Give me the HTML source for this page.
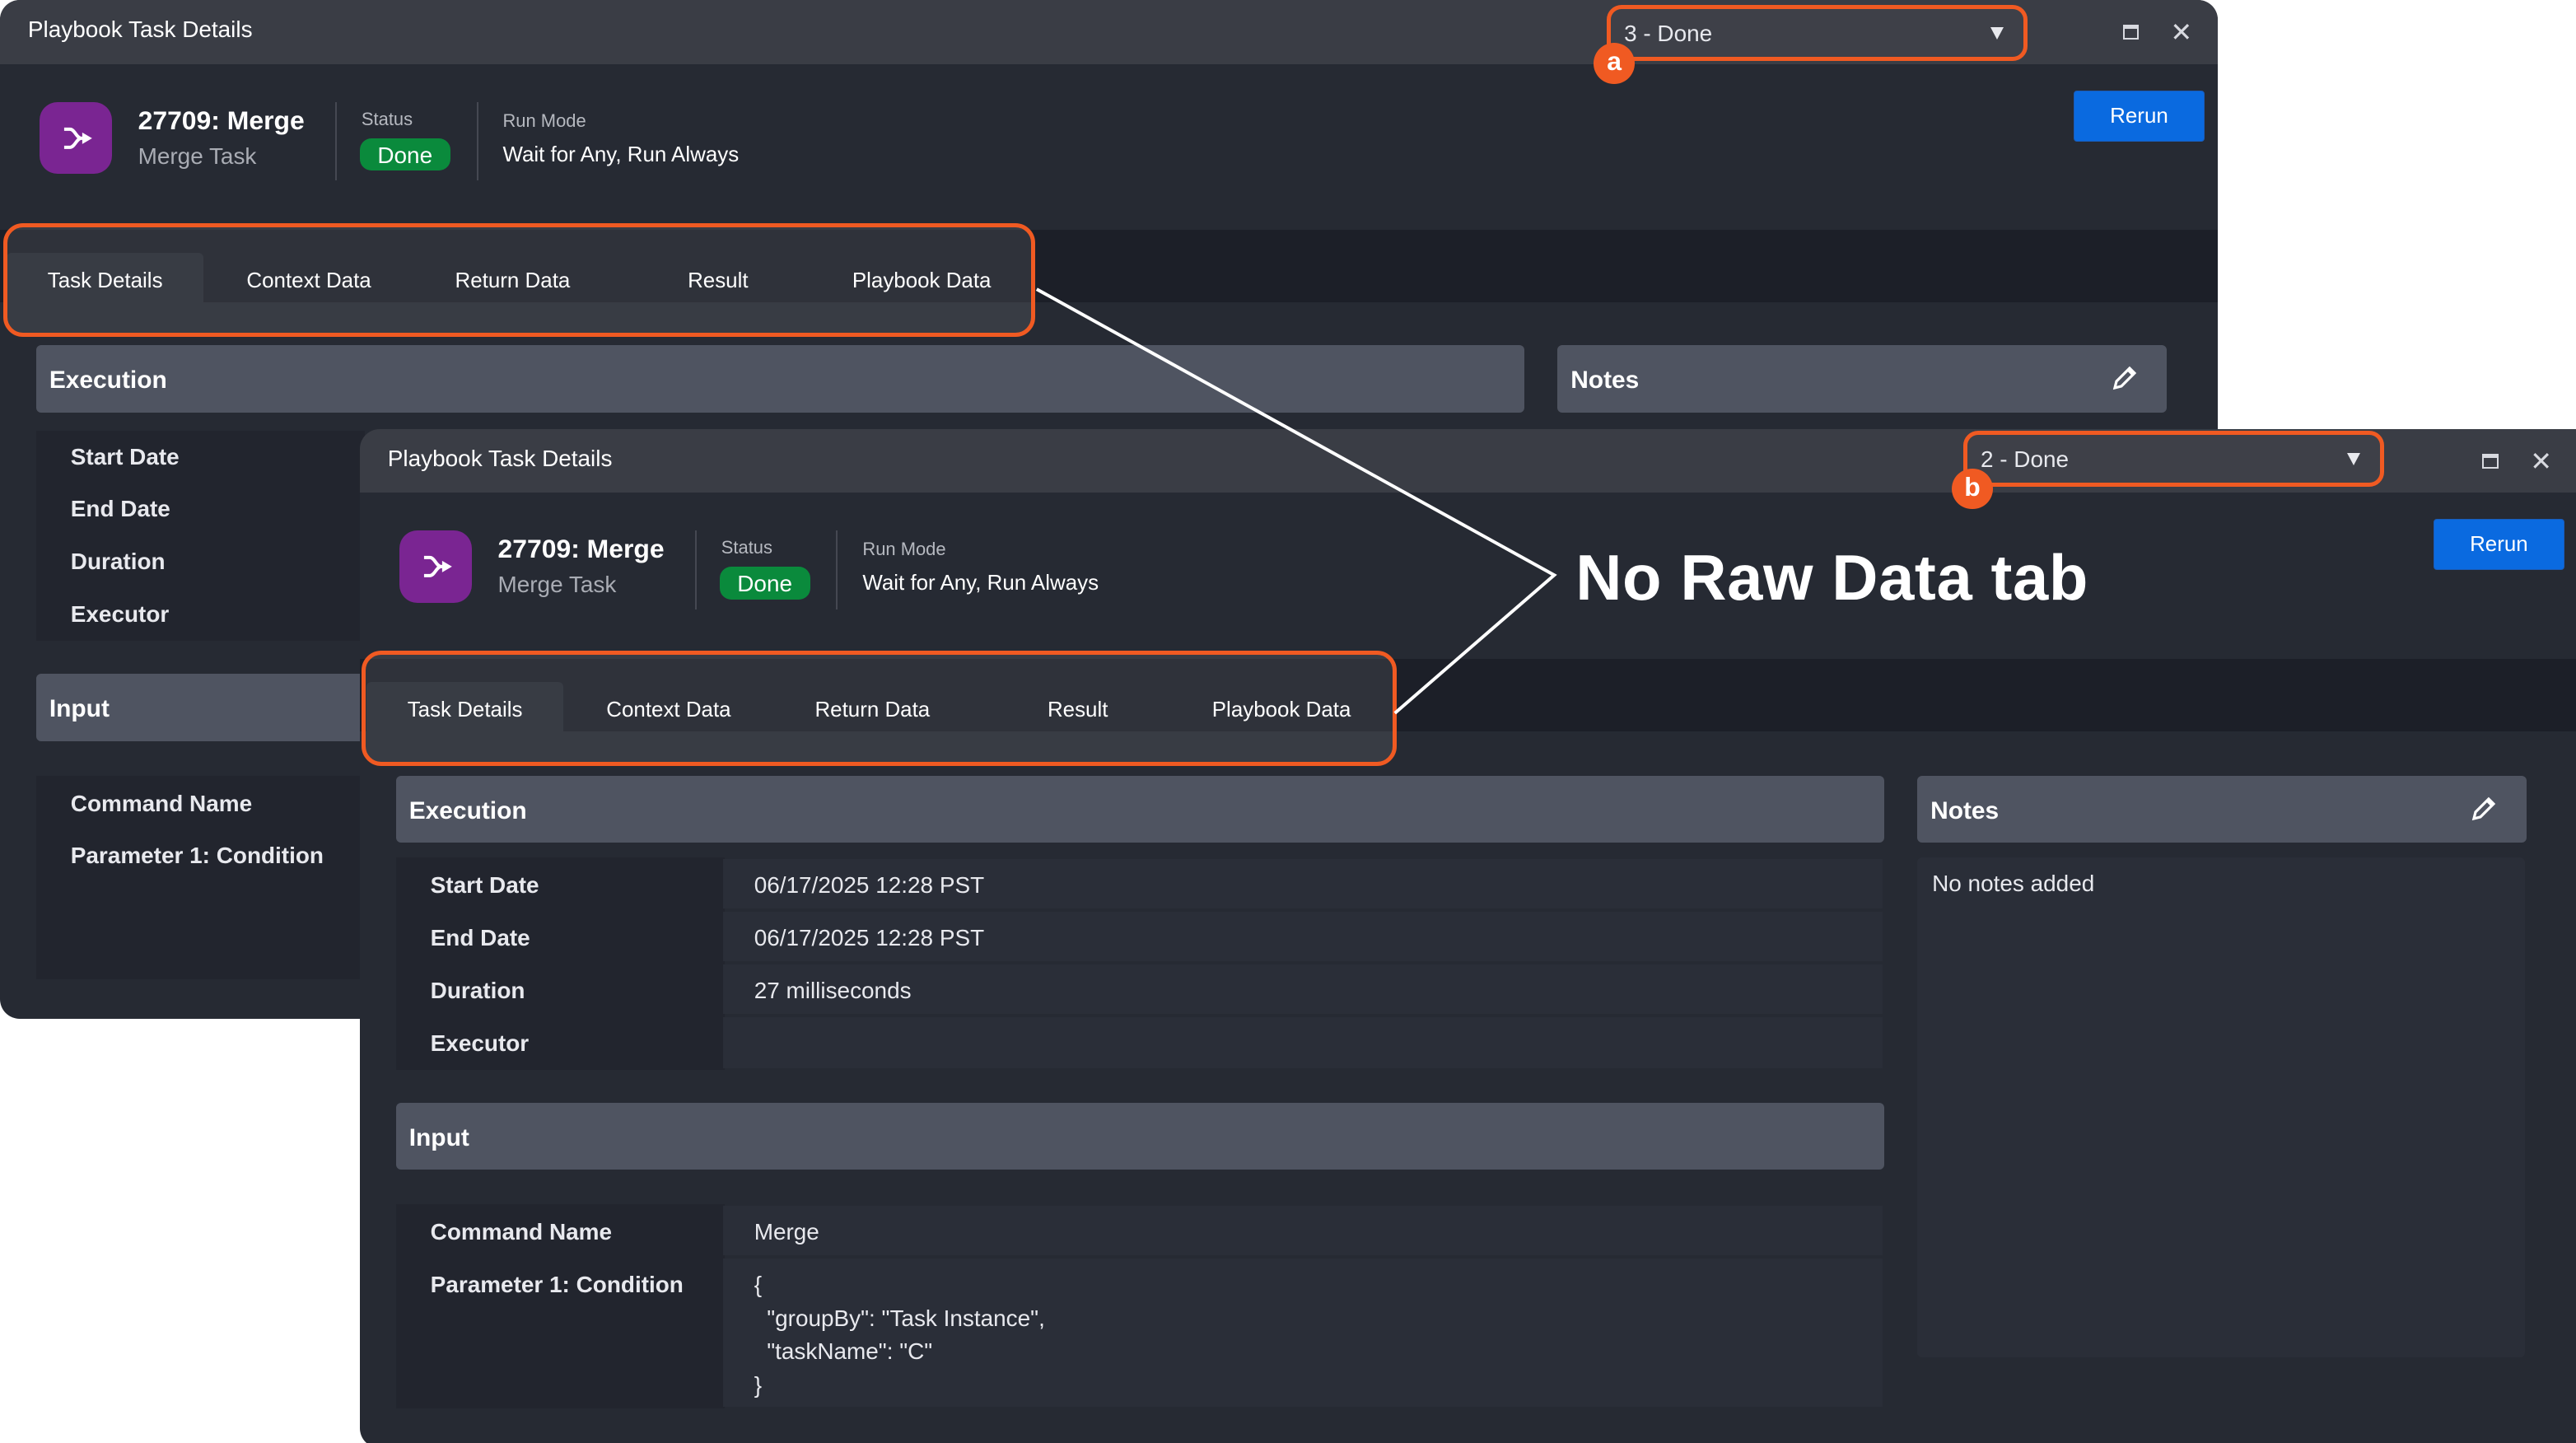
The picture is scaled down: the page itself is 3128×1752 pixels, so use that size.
<!DOCTYPE html>
<html><head><meta charset="utf-8"><style>
*{box-sizing:border-box;margin:0;padding:0}
html,body{width:3128px;height:1752px;overflow:hidden;background:#fff}
#root{zoom:1.995;position:relative;width:1568px;height:878px;font-family:"Liberation Sans",sans-serif;color:#e8e9ee}
.win{position:absolute;background:#262a33;overflow:hidden}
.abs{position:absolute}
.tbar{position:absolute;left:0;top:0;right:0;height:39px;background:#3a3d45}
.ttl{position:absolute;left:17px;top:10px;font-size:14px;color:#fff}
.dd{position:absolute;left:978px;top:3px;width:256px;height:34px;border:3px solid #f05a22;border-radius:9px;background:#3e4048}
.dd span{position:absolute;left:8px;top:7px;font-size:14px;color:#e8e9ee}
.dd i{position:absolute;right:12px;top:11px;width:0;height:0;border-left:4.5px solid transparent;border-right:4.5px solid transparent;border-top:8px solid #e8e9ee}
.circ{position:absolute;left:970px;top:26px;width:25px;height:25px;border-radius:50%;background:#f05a22;color:#fff;font-weight:bold;font-size:16px;text-align:center;line-height:23px}
.max{position:absolute;left:1292px;top:15px;width:10px;height:9px;border:1.5px solid #d8dae0;border-top-width:3px}
.cls{position:absolute;left:1321px;top:13px;font-size:16px;color:#d8dae0;line-height:14px}
.icon{position:absolute;left:24px;top:62px;width:44px;height:44px;border-radius:11px;background:#7a2592}
.nm{position:absolute;left:84px;top:64px;font-size:16px;font-weight:bold;color:#fff}
.sub{position:absolute;left:84px;top:87px;font-size:14px;color:#a9acb4}
.vd{position:absolute;top:62px;width:1px;height:48px;background:#454852}
.lab{position:absolute;font-size:11px;color:#b6b9c0}
.pill{position:absolute;left:219px;top:84px;width:55px;height:20px;border-radius:7px;background:#0a8a3c;color:#fff;font-size:14px;text-align:center;line-height:21px}
.rm{position:absolute;left:306px;top:87px;font-size:13px;color:#fff}
.rerun{position:absolute;left:1262px;top:55px;width:80px;height:31px;background:#0a6ae0;border:1px solid #1a5cb8;border-radius:2px;color:#fff;font-size:13px;text-align:center;line-height:31px}
.strip{position:absolute;left:0;right:0;top:140px;height:44px;background:#1c1f28}
.tab{position:absolute;top:154px;height:30px;font-size:13px;color:#fff;line-height:35px;text-align:center}
.tab.act{background:#262a33;border-radius:3px 3px 0 0}
.obox{position:absolute;left:2px;top:136px;width:628px;height:69px;border:3px solid #f05a22;border-radius:12px;background:rgba(255,255,255,.085)}
.sh{position:absolute;height:41px;background:#4f5461;border-radius:3px;font-size:15px;font-weight:bold;color:#fff;padding:13px 0 0 8px}
.lc{position:absolute;background:#22252e}
.vr{position:absolute;background:#2a2e38}
.rl{position:absolute;font-size:14px;font-weight:bold;color:#e8e9ee}
.rv{position:absolute;font-size:14px;color:#e8e9ee}
</style></head><body><div id="root">

<!-- BACK WINDOW -->
<div class="win" style="left:0;top:0;width:1350px;height:620px;border-radius:12px">
  <div class="tbar"></div><div class="ttl">Playbook Task Details</div>
  <div class="max"></div><div class="cls">✕</div>
  <div class="icon"><svg width="44" height="44" viewBox="0 0 44 44"><path d="M15 16.5h3.5c3 0 4 5.5 7 5.5M15 27.5h3.5c3 0 4-5.5 7-5.5h2" fill="none" stroke="#fff" stroke-width="2"/><path d="M26 18.5l6 3.5-6 3.5z" fill="#fff"/></svg></div>
  <div class="nm">27709: Merge</div><div class="sub">Merge Task</div>
  <div class="vd" style="left:204px"></div><div class="lab" style="left:220px;top:66px">Status</div><div class="pill">Done</div>
  <div class="vd" style="left:290px"></div><div class="lab" style="left:306px;top:67px">Run Mode</div><div class="rm">Wait for Any, Run Always</div>
  <div class="rerun">Rerun</div>
  <div class="strip"></div>
  <div class="tab act" style="left:4px;width:120px">Task Details</div>
  <div class="tab" style="left:128px;width:120px">Context Data</div>
  <div class="tab" style="left:252px;width:120px">Return Data</div>
  <div class="tab" style="left:377px;width:120px">Result</div>
  <div class="tab" style="left:501px;width:120px">Playbook Data</div>
  <div class="sh" style="left:22px;top:210px;width:906px">Execution</div>
  <div class="sh" style="left:948px;top:210px;width:371px">Notes
    <svg class="abs" style="left:337px;top:12px" width="16" height="16" viewBox="0 0 16 16"><path d="M2 14l1-4 8-8 3 3-8 8z M10 3l3 3" fill="none" stroke="#fff" stroke-width="1.6"/></svg></div>
  <div class="lc" style="left:22px;top:262px;width:200px;height:128px"></div>
  <div class="rl" style="left:43px;top:270px">Start Date</div>
  <div class="rl" style="left:43px;top:302px">End Date</div>
  <div class="rl" style="left:43px;top:334px">Duration</div>
  <div class="rl" style="left:43px;top:366px">Executor</div>
  <div class="sh" style="left:22px;top:410px;width:906px">Input</div>
  <div class="lc" style="left:22px;top:472px;width:200px;height:124px"></div>
  <div class="rl" style="left:43px;top:481px">Command Name</div>
  <div class="rl" style="left:43px;top:513px">Parameter 1: Condition</div>
</div>
<div class="obox"></div>
<div class="dd"><span>3 - Done</span><i></i></div>
<div class="circ">a</div>

<!-- FRONT WINDOW -->
<div class="win" style="left:219px;top:261px;width:1349px;height:620px;border-radius:12px 0 0 12px">
  <div class="tbar"></div><div class="ttl">Playbook Task Details</div>
  <div class="max"></div><div class="cls">✕</div>
  <div class="icon"><svg width="44" height="44" viewBox="0 0 44 44"><path d="M15 16.5h3.5c3 0 4 5.5 7 5.5M15 27.5h3.5c3 0 4-5.5 7-5.5h2" fill="none" stroke="#fff" stroke-width="2"/><path d="M26 18.5l6 3.5-6 3.5z" fill="#fff"/></svg></div>
  <div class="nm">27709: Merge</div><div class="sub">Merge Task</div>
  <div class="vd" style="left:204px"></div><div class="lab" style="left:220px;top:66px">Status</div><div class="pill">Done</div>
  <div class="vd" style="left:290px"></div><div class="lab" style="left:306px;top:67px">Run Mode</div><div class="rm">Wait for Any, Run Always</div>
  <div class="rerun">Rerun</div>
  <div class="strip"></div>
  <div class="tab act" style="left:4px;width:120px">Task Details</div>
  <div class="tab" style="left:128px;width:120px">Context Data</div>
  <div class="tab" style="left:252px;width:120px">Return Data</div>
  <div class="tab" style="left:377px;width:120px">Result</div>
  <div class="tab" style="left:501px;width:120px">Playbook Data</div>
  <div class="sh" style="left:22px;top:211px;width:906px">Execution</div>
  <div class="sh" style="left:948px;top:211px;width:371px">Notes
    <svg class="abs" style="left:337px;top:12px" width="16" height="16" viewBox="0 0 16 16"><path d="M2 14l1-4 8-8 3 3-8 8z M10 3l3 3" fill="none" stroke="#fff" stroke-width="1.6"/></svg></div>
  <div class="vr" style="left:948px;top:261px;width:370px;height:304px;border-radius:3px"></div>
  <div class="rv" style="left:957px;top:269px">No notes added</div>
  <div class="lc" style="left:22px;top:261px;width:200px;height:129px"></div>
  <div class="vr" style="left:221px;top:262px;width:706px;height:30px"></div>
  <div class="vr" style="left:221px;top:294px;width:706px;height:30px"></div>
  <div class="vr" style="left:221px;top:326px;width:706px;height:30px"></div>
  <div class="vr" style="left:221px;top:358px;width:706px;height:31px"></div>
  <div class="rl" style="left:43px;top:270px">Start Date</div><div class="rv" style="left:240px;top:270px">06/17/2025 12:28 PST</div>
  <div class="rl" style="left:43px;top:302px">End Date</div><div class="rv" style="left:240px;top:302px">06/17/2025 12:28 PST</div>
  <div class="rl" style="left:43px;top:334px">Duration</div><div class="rv" style="left:240px;top:334px">27 milliseconds</div>
  <div class="rl" style="left:43px;top:366px">Executor</div>
  <div class="sh" style="left:22px;top:410px;width:906px">Input</div>
  <div class="lc" style="left:22px;top:472px;width:200px;height:124px"></div>
  <div class="vr" style="left:221px;top:473px;width:706px;height:30px"></div>
  <div class="vr" style="left:221px;top:505px;width:706px;height:90px"></div>
  <div class="rl" style="left:43px;top:481px">Command Name</div><div class="rv" style="left:240px;top:481px">Merge</div>
  <div class="rl" style="left:43px;top:513px">Parameter 1: Condition</div>
  <div class="rv" style="left:240px;top:511px;line-height:20.3px;white-space:pre">{
  "groupBy": "Task Instance",
  "taskName": "C"
}</div>
</div>
<div class="obox" style="left:220px;top:396px;width:630px;height:70px"></div>
<div class="dd" style="left:1195px;top:262px"><span>2 - Done</span><i></i></div>
<div class="circ" style="left:1188px;top:285px">b</div>

<svg class="abs" style="left:0;top:0" width="1568" height="878"><path d="M631 176L946 350L849 434" fill="none" stroke="#fff" stroke-width="2"/></svg>
<div class="abs" style="left:959px;top:330px;font-size:39px;font-weight:bold;color:#fff;letter-spacing:0.3px">No Raw Data tab</div>
</div></body></html>
